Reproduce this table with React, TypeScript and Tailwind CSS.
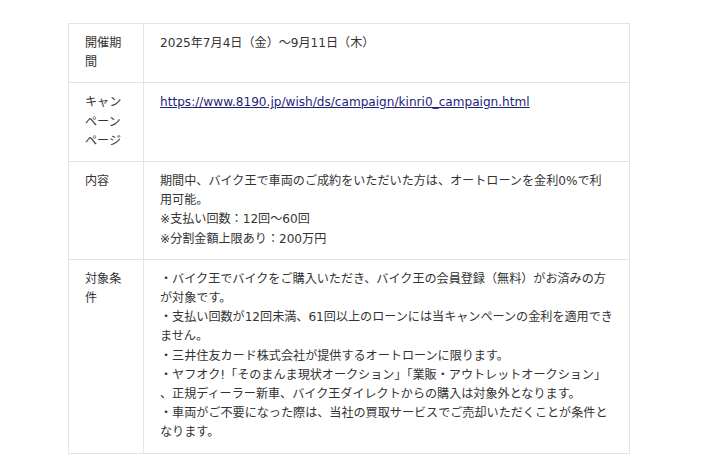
import React from 'react';

type Row = { label: string; body: React.ReactNode };

const rows: Row[] = [
  {
    label: '開催期間',
    body: <div>2025年7月4日（金）～9月11日（木）</div>,
  },
  {
    label: 'キャンペーンページ',
    body: (
      <a href="#" className="text-[#1f1f78] underline">
        https://www.8190.jp/wish/ds/campaign/kinri0_campaign.html
      </a>
    ),
  },
  {
    label: '内容',
    body: (
      <>
        <div>期間中、バイク王で車両のご成約をいただいた方は、オートローンを金利0%で利</div>
        <div>用可能。</div>
        <div>※支払い回数：12回〜60回</div>
        <div>※分割金額上限あり：200万円</div>
      </>
    ),
  },
  {
    label: '対象条件',
    body: (
      <>
        <div>・バイク王でバイクをご購入いただき、バイク王の会員登録（無料）がお済みの方</div>
        <div>が対象です。</div>
        <div>・支払い回数が12回未満、61回以上のローンには当キャンペーンの金利を適用でき</div>
        <div>ません。</div>
        <div>・三井住友カード株式会社が提供するオートローンに限ります。</div>
        <div>・ヤフオク!「そのまんま現状オークション」「業販・アウトレットオークション」</div>
        <div>、正規ディーラー新車、バイク王ダイレクトからの購入は対象外となります。</div>
        <div>・車両がご不要になった際は、当社の買取サービスでご売却いただくことが条件と</div>
        <div>なります。</div>
      </>
    ),
  },
];

const App: React.FC = () => {
  return (
    <div
      className="w-[710px] h-[474px] bg-white pt-[23px] pl-[68px] text-[#333] text-[12.1px] leading-[19.2px]"
      style={{ fontFamily: '"DejaVu Sans", "Noto Sans CJK JP", sans-serif' }}
    >
      <div className="w-[562px] border-t border-l border-[#e4e4e4]">
        {rows.map((r) => (
          <div key={r.label} className="flex border-b border-[#e4e4e4]">
            <div className="w-[75px] shrink-0 border-r border-[#e4e4e4] py-[10px] pl-[16px] pr-[16px] break-all">
              {r.label}
            </div>
            <div className="flex-1 border-r border-[#e4e4e4] py-[10px] pl-[16px] pr-[10px] whitespace-nowrap">
              {r.body}
            </div>
          </div>
        ))}
      </div>
    </div>
  );
};

export default App;
